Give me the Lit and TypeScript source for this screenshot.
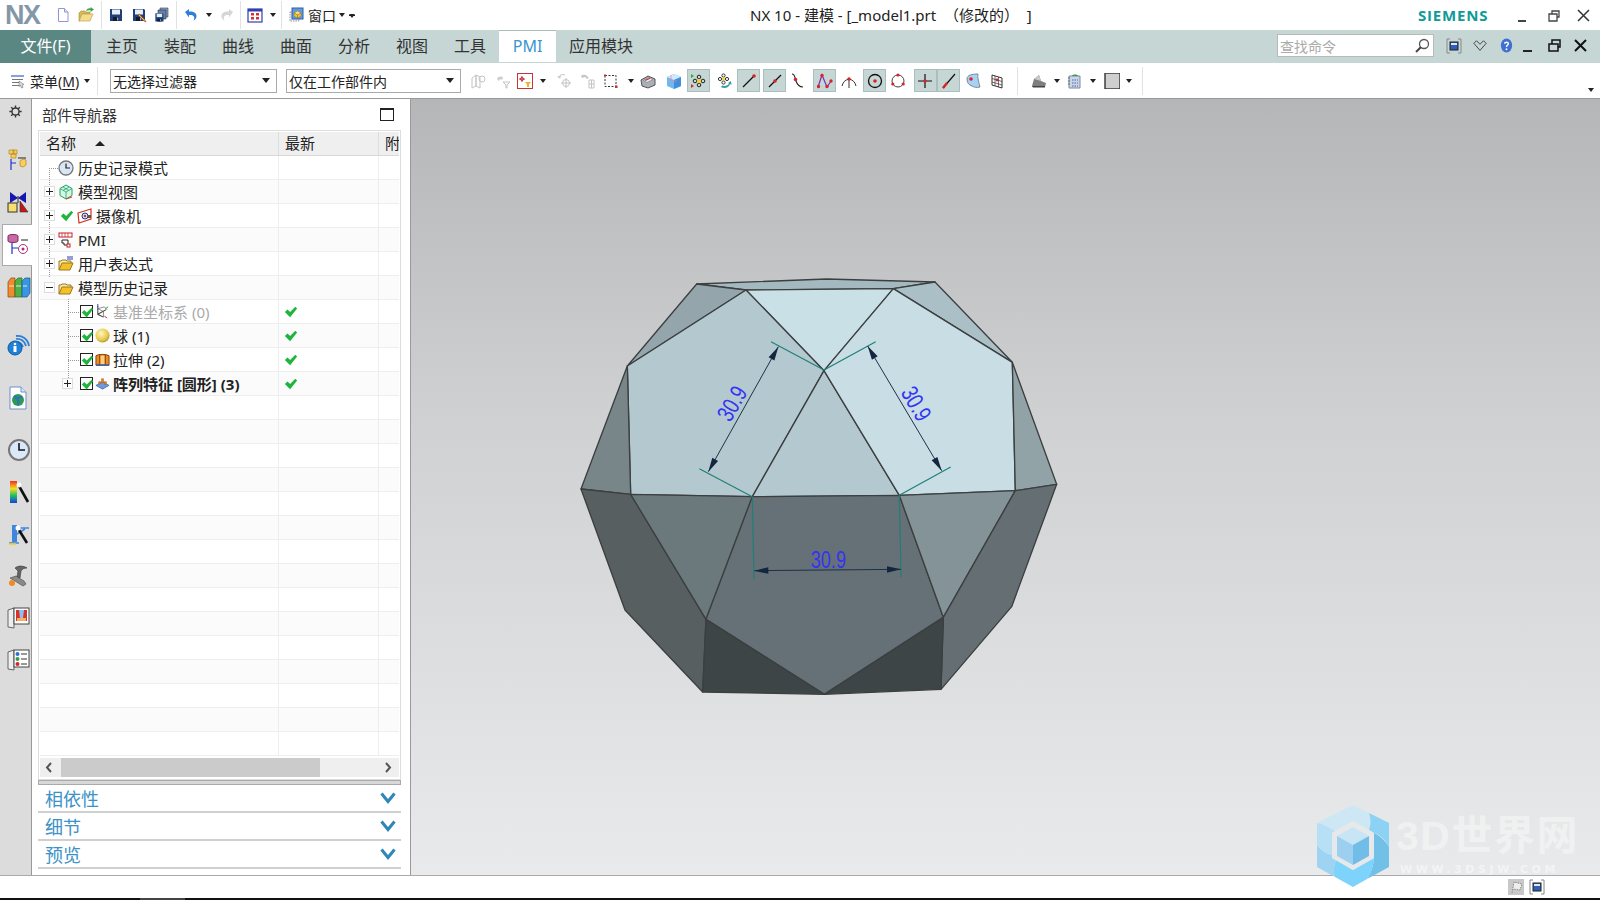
import { LitElement, html, css, svg } from 'lit';
import { customElement } from 'lit/decorators.js';

const ic = (body: unknown, size = 16, box = 16) =>
  html`<svg width=${size} height=${size} viewBox="0 0 ${box} ${box}">${body}</svg>`;

const floppy = svg`<path d="M2 2h11l1 1v11H2z" fill="#1f3f7a"/><rect x="4" y="2.5" width="8" height="5" fill="#e8eef8"/><rect x="5" y="10" width="6" height="4" fill="#101a33"/><rect x="9" y="10.5" width="1.4" height="3" fill="#9ab"/>`;

const icons: Record<string, unknown> = {
  doc: svg`<path d="M3.5 1.5h6l3.5 3.5v9.5h-9.500z" fill="#fff" stroke="#8f96d8"/><path d="M9.500 1.500v3.500h3.500" fill="#e4e6fa" stroke="#8f96d8"/>`,
  open: svg`<path d="M1 6l2-2h4l1 1h4v2H5L2 14H1z" fill="#d9b95a" stroke="#a58a35" stroke-width=".6"/><path d="M4 7h11l-3 7H1z" fill="#f3dc8b" stroke="#b59a45" stroke-width=".6"/><path d="M8 4c1-2.500 3-3 4.500-2.500V0L16 2.500 12.500 5V3.300C11 3 9.500 3 8 4z" fill="#3fa34a"/>`,
  save: floppy,
  saveas: svg`${floppy}<path d="M7 8l6 6 2 1-1-2-6-6z" fill="#f2c230" stroke="#a33" stroke-width=".6"/>`,
  saveall: svg`<path d="M6 1h8v9H6z" fill="#8a9cb8" stroke="#345"  stroke-width=".6"/><path d="M4 3h8v9H4z" fill="#6a80a8" stroke="#234" stroke-width=".6"/><g transform="translate(0 5) scale(.68)">${floppy}</g>`,
  undo: svg`<path d="M2 5l4-3v2.500c4-.5 7.500 1 7.500 4.500 0 2-1 3.500-3 4.500 1-1.500 1-3.500 0-4.500C9.500 8 8 7.800 6 8v2.500z" fill="#2f7fd6"/>`,
  redo: svg`<path d="M14 5l-4-3v2.500c-4-.5-7.500 1-7.500 4.500 0 2 1 3.500 3 4.500-1-1.500-1-3.500 0-4.500C6.500 8 8 7.800 10 8v2.500z" fill="#d6d6d6"/>`,
  win: svg`<rect x="1" y="2" width="14" height="13" fill="#fff" stroke="#2f3fb0" stroke-width="1.200"/><rect x="1" y="2" width="14" height="2.500" fill="#2f3fb0"/><g fill="#d63030"><rect x="4" y="6" width="3" height="2.500"/><rect x="9" y="6" width="3" height="2.500"/><rect x="4" y="10" width="3" height="2.500"/><rect x="9" y="10" width="3" height="2.500"/></g>`,
  layers: svg`<rect x="2" y="5" width="9" height="9" fill="#eee" stroke="#999" stroke-dasharray="1.500 1"/><rect x="4" y="1" width="11" height="11" fill="#5d9be0" stroke="#2f5fa8"/><path d="M6 6l3.500-2 3.500 2-3.500 2z" fill="#ffe07a" stroke="#a8801f" stroke-width=".6"/><path d="M6 6v3l3.500 2V8zM13 6v3l-3.500 2V8z" fill="#f5c542" stroke="#a8801f" stroke-width=".6"/>`,
  menu: svg`<path d="M1 3h13" stroke="#6f86d8" stroke-width="1.600"/><path d="M2 6.500h11M2 9.500h9M2 12.500h9" stroke="#777" stroke-width="1.200"/><path d="M9 8l5 3.500-2 .5 1 2.500-1.500.5-1-2.500-1.500 1z" fill="#ddd" stroke="#777" stroke-width=".6"/>`,
  ghost1: svg`<path d="M2 5l4-3v11l-4 2zM6 2l4 2v11l-4-2z" fill="none" stroke="#c4c4c4"/><circle cx="12" cy="6" r="3" fill="none" stroke="#c4c4c4"/>`,
  ghost2: svg`<path d="M2 6c1-3 4-3 6-2l-1 3-2-1-1 2z" fill="#ccc"/><path d="M8 9h7l-3 3v3h-1v-3z" fill="none" stroke="#c4c4c4"/>`,
  redbox: svg`<rect x=".5" y=".5" width="15" height="15" fill="#fff" stroke="#c8323a"/><path d="M5 3v6M2 6h6" stroke="#c8323a"/><circle cx="5" cy="6" r="1.500" fill="none" stroke="#c8323a"/><path d="M8 9h6l-2 2.500V14h-2v-2.500z" fill="#f2b230"/>`,
  ghost3: svg`<path d="M3 5c0-3 3-4 6-3" fill="none" stroke="#c4c4c4"/><path d="M1 3l3 3 1-3z" fill="#ccc"/><circle cx="10" cy="10" r="3.500" fill="none" stroke="#c4c4c4"/><path d="M10 5v10M5 10h10" fill="none" stroke="#c4c4c4"/>`,
  ghost4: svg`<path d="M2 3c2-2 5-1 6 0l2 2-2 1-2-2-3 1z" fill="#c8c8c8"/><path d="M10 7h5v8h-5zM12.500 7v8M10 11h5" fill="none" stroke="#c4c4c4"/>`,
  dashed: svg`<rect x="2" y="2.500" width="11" height="11" fill="none" stroke="#333" stroke-dasharray="2 1.500"/><rect x="1" y="1.500" width="2" height="2" fill="#c8323a"/><rect x="12" y="12.500" width="2.500" height="2.500" fill="#c8323a"/>`,
  book: svg`<path d="M1 7l7-4 7 3v6l-7 3-6-2z" fill="#a8b0b8" stroke="#555"/><path d="M3 7.500l6-3 4 2-6 3z" fill="#e8e8ec" stroke="#777" stroke-width=".6"/><path d="M5 7.500l5-2.300" stroke="#c8323a" stroke-width="1.200"/>`,
  cube: svg`<path d="M8 1l7 3v9l-7 3-7-3V4z" fill="#6fb8f0"/><path d="M1 4l7 3 7-3-7-3z" fill="#d2e9fa"/><path d="M8 7v9l7-3V4z" fill="#3f8fe0"/><path d="M5 2v6h6" fill="none" stroke="#e88" stroke-width=".7"/>`,
  snapcenter: svg`<g fill="none" stroke="#222"><circle cx="4" cy="8" r="1.800"/><circle cx="12" cy="8" r="1.800"/><circle cx="8" cy="4" r="1.800"/><circle cx="8" cy="12" r="1.800"/></g><path d="M8 5.500L10.500 8 8 10.500 5.500 8z" fill="#f5d020"/><path d="M0 1l3 2-3 2z" fill="#22b040"/><path d="M0 11l3 2-3 2z" fill="#d62c2c"/>`,
  orbit: svg`<g fill="none" stroke="#333"><circle cx="4" cy="6" r="1.600"/><circle cx="11" cy="6" r="1.600"/><circle cx="7.500" cy="2.500" r="1.600"/><circle cx="7.500" cy="9.500" r="1.600"/></g><circle cx="7.500" cy="6" r="1.400" fill="#f5d020"/><path d="M5 14c3 2 8 1 9-3l1.500 1-.5-4-3 2 1 .5c-1 2-4 3-7 2z" fill="#3c9aa8"/>`,
  line1: svg`<path d="M2 14L13 3" stroke="#111" stroke-width="1.200"/><circle cx="13" cy="3" r="1.800" fill="#d8232a"/>`,
  line2: svg`<path d="M2 14L14 2" stroke="#111" stroke-width="1.200"/><circle cx="8" cy="8" r="1.800" fill="#d8232a"/>`,
  curve: svg`<path d="M2 1c3 0 3 4 4 7s3 6 7 6" fill="none" stroke="#222" stroke-width="1.100"/><circle cx="5.500" cy="6.500" r="1.800" fill="#d8232a"/>`,
  zig: svg`<path d="M1 14L5 2l5 12 4-6" fill="none" stroke="#7a2fb0" stroke-width="1.200"/><g fill="#d8232a"><circle cx="5" cy="2.500" r="1.700"/><circle cx="1.500" cy="13.500" r="1.700"/><circle cx="10" cy="13.500" r="1.700"/><circle cx="14" cy="8" r="1.700"/></g>`,
  arrowpt: svg`<path d="M1 13c1-4 3-6 7-7 4 1 6 3 7 7M8 6v9" fill="none" stroke="#333"/><circle cx="8" cy="6" r="1.700" fill="#d8232a"/>`,
  target: svg`<circle cx="8" cy="8" r="6.500" fill="none" stroke="#111" stroke-width="1.300"/><circle cx="8" cy="8" r="1.800" fill="#d8232a"/>`,
  ring: svg`<circle cx="8" cy="8" r="6" fill="none" stroke="#444"/><g fill="#d8232a"><circle cx="8" cy="2" r="1.600"/><circle cx="2.800" cy="11" r="1.600"/><circle cx="13.200" cy="11" r="1.600"/></g>`,
  plus: svg`<path d="M8 1v14M1 8h14" stroke="#111" stroke-width="1.200"/><circle cx="8" cy="8" r="1.700" fill="#d8232a"/>`,
  slash: svg`<path d="M2 15L14 1" stroke="#111" stroke-width="1.200"/><path d="M2 15l4-5" stroke="#d8232a" stroke-width="2.400"/>`,
  face: svg`<path d="M2 6c0-4 5-5 11-5-1 3 1 9 2 13-4 1-6 0-8-1-3-1-5-3-5-7z" fill="#a9d2f2" stroke="#789"/><circle cx="6" cy="6" r="1.800" fill="#d8232a"/>`,
  mesh: svg`<path d="M3 2l10 3v10L3 12z" fill="#fff" stroke="#333"/><path d="M6 3v10M9.500 4v10M3 5.500l10 3M3 9l10 3" stroke="#333" stroke-width=".7"/><circle cx="8" cy="7" r="1.400" fill="#d8232a"/>`,
  shade: svg`<path d="M1 13l2-7 5-4 2 6 5 2-1 4H2z" fill="#7d7f80"/><path d="M8 2l2 6-7-2z" fill="#c8c8c8"/><path d="M1 13h13v1.500H2z" fill="#444"/>`,
  notes: svg`<path d="M2 3h11v12H2z" fill="#c9d6e8" stroke="#7b8b9d"/><path d="M1 5h2M1 8h2M1 11h2" stroke="#666"/><path d="M5 3c0-2 6-2 6 0z" fill="#3f9a5a"/><path d="M5 7h6M5 10h6M5 13h6" stroke="#4a60b0" stroke-dasharray="1.500 1"/>`,
  swatch: svg`<rect x="1" y="0" width="15" height="16" fill="#cfcfcf" stroke="#333" stroke-width="1.400"/>`,
  mag: svg`<circle cx="10" cy="6" r="4.500" fill="#fff" stroke="#555" stroke-width="1.300"/><path d="M7 9l-5 5" stroke="#444" stroke-width="2"/>`,
  fit: svg`<path d="M4 1H1v14h3M12 1h3v14h-3" fill="none" stroke="#888"/><rect x="4" y="4" width="8" height="8" fill="#2f5fb8" stroke="#222"/><rect x="5" y="5" width="6" height="2" fill="#dfe8f8"/>`,
  vee: svg`<path d="M1 5l3-3 4 4 4-4 3 3-7 8z" fill="none" stroke="#333"/>`,
  help: svg`<ellipse cx="8" cy="8" rx="6" ry="7.500" fill="#3f6fd0"/><path d="M6 6c0-2 4-2 4 0 0 1.500-2 1.500-2 3.500" fill="none" stroke="#fff" stroke-width="1.500"/><circle cx="8" cy="12" r="1" fill="#fff"/>`,
  clock: svg`<circle cx="8" cy="8" r="7" fill="#d8e6f5" stroke="#777" stroke-width="1.300"/><path d="M8 3.500V8h4" fill="none" stroke="#222" stroke-width="1.200"/>`,
  box3: svg`<path d="M8 1l6 3.500v7L8 15l-6-3.500v-7z" fill="#d6f5e4" stroke="#1ea36b"/><path d="M2 4.500L8 8l6-3.500M8 8v7M5 3l6 3.500M11 3L5 6.500" fill="none" stroke="#1ea36b" stroke-width=".8"/><path d="M8 15l6-2" stroke="#e0442c" stroke-width="1.200"/>`,
  cam: svg`<path d="M1 5l13-4v10L2 15z" fill="#fff" stroke="#d6301f" stroke-width="1.200"/><circle cx="8" cy="8" r="3" fill="#f5c5bf" stroke="#233a8f"/><circle cx="8" cy="8" r="1" fill="#233a8f"/><rect x="11" y="7" width="3" height="3" fill="#555"/>`,
  pmi: svg`<rect x="1" y="1" width="13" height="4" fill="#fff" stroke="#c81e2a"/><path d="M4 1v4M7 1v4M10 1v4" stroke="#c81e2a" stroke-width=".7"/><path d="M4 8h6v5H6V11H4z" fill="#fff" stroke="#222"/><rect x="9" y="12" width="3" height="3" fill="#fff" stroke="#c81e2a"/>`,
  folder: svg`<path d="M1 14V5h2l1-1h4l1 1h4v2" fill="#f9e7a8" stroke="#9a7a1e"/><path d="M1 14l3-7h11l-3 7z" fill="#f5bf28" stroke="#9a7a1e"/>`,
  folderx: svg`<path d="M1 14V5h2l1-1h4l1 1h4v2" fill="#f9e7a8" stroke="#9a7a1e"/><path d="M1 14l3-7h11l-3 7z" fill="#f5bf28" stroke="#9a7a1e"/><path d="M9 1h6M9 3h6" stroke="#2f3fb0"/>`,
  csys: svg`<path d="M3 2v9l6 3M3 11l9-5" fill="none" stroke="#444" stroke-width="1.100"/><path d="M3 5l6 3v6M3 5l7-2 3 3" fill="none" stroke="#555" stroke-width=".7"/><path d="M3 0v3" stroke="#2233cc"/><path d="M11 5l3-2" stroke="#1ea33c"/><path d="M10 13l3 2" stroke="#d8232a"/>`,
  ball: svg`<defs><radialGradient id="bl" cx=".4" cy=".35" r=".7"><stop offset="0" stop-color="#fff6c0"/><stop offset=".7" stop-color="#e3c84a"/><stop offset="1" stop-color="#a8902a"/></radialGradient></defs><circle cx="8" cy="8" r="7.500" fill="url(#bl)"/>`,
  extrude: svg`<path d="M1 4c3-2 11-2 14 0v10H1z" fill="#f08a24" stroke="#7a4210"/><path d="M5 3v11M11 3v11" stroke="#7a4210"/><path d="M6 4h4v9H6z" fill="#ffd07a"/><path d="M1 14h14" stroke="#2f5fb8" stroke-width="1.500"/>`,
  pattern: svg`<path d="M1 10l7-4 7 4-7 4z" fill="#6a9be0" stroke="#2f5fb8" stroke-width=".7"/><path d="M4 9V6h2v2zM7 7V3h2v4zM10 9V6h2v3z" fill="#f08a24" stroke="#a85510" stroke-width=".6"/>`,
  gear: svg`<circle cx="8" cy="8" r="3.800" fill="none" stroke="#333" stroke-width="1.500"/><path d="M8 1.500v2.500M8 12v2.500M1.500 8H4M12 8h2.500M3.400 3.400l1.800 1.800M10.800 10.800l1.800 1.800M3.400 12.600l1.800-1.800M10.800 5.200l1.800-1.800" stroke="#333" stroke-width="1.500"/>`,
  asm: svg`<path d="M2 1h5v4H2zM6 1h4v4H6zM4 5h5v4H4z" fill="#f5d060" stroke="#b8902a" stroke-width=".8"/><path d="M4 10v11M4 14h5" stroke="#2233cc" stroke-width="1.200"/><path d="M11 9h8" stroke="#222"/><path d="M13 12l3-2 3 1v5l-3 2-3-1z" fill="#f5d060" stroke="#b8902a" stroke-width=".8"/>`,
  cons: svg`<path d="M3 1l8 6 8-6v11l-8-5-8 5z" fill="#1616b0"/><rect x="1" y="12" width="9" height="9" fill="#f5e070" stroke="#333"/><path d="M13 10l8 11h-8z" fill="#c81616" stroke="#333" stroke-width=".6"/><path d="M11 5v7" stroke="#222"/>`,
  partnav: svg`<path d="M1 3c0-2 10-2 10 0v5c0 2-10 2-10 0z" fill="#c868a8" stroke="#7a2a60"/><path d="M5 10v11M5 15h6" stroke="#2233cc" stroke-width="1.200"/><path d="M14 7h7" stroke="#222"/><circle cx="16" cy="16" r="4.500" fill="#fff" stroke="#a8327a"/><circle cx="16" cy="16" r="1.500" fill="#a8327a"/>`,
  books: svg`<path d="M1 7l3-4h4v19H1z" fill="#f28a30" stroke="#8a4a10" stroke-width=".7"/><path d="M8 6l3-3h4v19H8z" fill="#4fb048" stroke="#256a20" stroke-width=".7"/><path d="M15 6l3-3h5v15l-3 4h-5z" fill="#3a96e0" stroke="#1a5a90" stroke-width=".7"/><path d="M2 11h5M9 11h5M16 11h4" stroke="#fff" stroke-width=".8"/>`,
  info: svg`<path d="M9 3c6-1 12 3 13 10M9 6c4-1 9 2 10 7M9 9c3 0 6 2 7 5" fill="none" stroke="#2f7fd6" stroke-width="1.800"/><circle cx="8" cy="15" r="7" fill="#1f80d8" stroke="#0f5aa0"/><circle cx="8" cy="11" r="1.300" fill="#fff"/><rect x="6.500" y="13" width="3" height="6" fill="#fff"/>`,
  webdoc: svg`<path d="M3 1h11l5 5v17H3z" fill="#fff" stroke="#6a8fc8"/><path d="M14 1v5h5" fill="#dde8f8" stroke="#6a8fc8"/><circle cx="11" cy="14" r="6" fill="#2f9a55"/><path d="M7 10c3 1 5 4 4 9M15 11c-3 0-4 2-7 1" stroke="#2f6fc8" stroke-width="1.800" fill="none"/>`,
  clockbig: svg`<circle cx="12" cy="12" r="10" fill="#dbe8f8" stroke="#777" stroke-width="2"/><path d="M12 5v7h6" fill="none" stroke="#112" stroke-width="1.600"/>`,
  color: svg`<defs><linearGradient id="sp" x1="0" y1="0" x2="0" y2="1"><stop offset="0" stop-color="#f03020"/><stop offset=".35" stop-color="#f5e020"/><stop offset=".65" stop-color="#20c060"/><stop offset="1" stop-color="#1a40e0"/></linearGradient></defs><rect x="3" y="1" width="7" height="22" fill="url(#sp)"/><path d="M12 6l9 16" stroke="#111" stroke-width="2.600"/><circle cx="12" cy="5" r="2.500" fill="#fff" opacity=".9"/>`,
  analysis: svg`<path d="M5 3h5v17H5z" fill="#3f86dc"/><path d="M10 6h12M10 12l8-5M2 21h10" stroke="#3f86dc" stroke-width="1.500" fill="none"/><path d="M12 8l8 13" stroke="#111" stroke-width="2.600"/><circle cx="11" cy="6" r="2.500" fill="#fff"/><path d="M2 22h7" stroke="#f5d020" stroke-width="1.500"/>`,
  tools: svg`<path d="M8 4c4-3 9-2 12 0-3 0-5 1-6 3l-1 7-3-1 1-6z" fill="#666" stroke="#333" stroke-width=".6"/><path d="M3 14l6-2 8 5 2 3-3 2-8-5z" fill="#8a8a8e" stroke="#444" stroke-width=".6"/><circle cx="5" cy="19" r="3" fill="#f08a24"/>`,
  reel: svg`<path d="M1 4l6-2v20l-6-1z" fill="#eee" stroke="#666"/><rect x="7" y="2" width="15" height="16" fill="#fff" stroke="#444"/><rect x="9" y="4" width="11" height="11" fill="#d8322a"/><path d="M12 4h5l-1 8h-3z" fill="#8ac0f5"/><rect x="10" y="12" width="9" height="3" fill="#f5b060"/>`,
  list: svg`<path d="M1 4l6-2v20l-6-1z" fill="#eee" stroke="#666"/><rect x="7" y="2" width="15" height="17" fill="#fff" stroke="#444"/><circle cx="10.500" cy="6" r="2" fill="#2f6fd6"/><circle cx="10.500" cy="11" r="2" fill="#2fa04a"/><circle cx="10.500" cy="16" r="2" fill="#d8232a"/><path d="M14 6h6M14 11h6M14 16h6" stroke="#333"/>`,
  check: svg`<path d="M1 8l3-3 3 3 6-6 2 2-8 10z" fill="#1fb53c"/>`,
  flag: svg`<rect width="16" height="16" fill="#c8c8c8"/><path d="M4 14L6 3l8 2-2 6-7-1" fill="#eee" stroke="#888" stroke-dasharray="1.500 1"/>`,
};

const icon = (k: string, size = 16) => {
  const big = ['asm', 'cons', 'partnav', 'books', 'info', 'webdoc', 'clockbig', 'color', 'analysis', 'tools', 'reel', 'list'];
  return ic(icons[k], size, big.includes(k) ? 24 : 16);
};

type Item = { c: number; k?: string; hl?: boolean; drop?: boolean; sep?: boolean };

const quick: Item[] = [
  { c: 46, sep: true },
  { c: 63, k: 'doc' }, { c: 86, k: 'open' },
  { c: 101, sep: true },
  { c: 116, k: 'save' }, { c: 139, k: 'saveas' }, { c: 162, k: 'saveall' },
  { c: 176, sep: true },
  { c: 191, k: 'undo' }, { c: 209, drop: true }, { c: 227, k: 'redo' },
  { c: 240, sep: true },
  { c: 255, k: 'win' }, { c: 273, drop: true },
  { c: 281, sep: true },
  { c: 296, k: 'layers' },
];

const tools: Item[] = [
  { c: 478, k: 'ghost1' }, { c: 503, k: 'ghost2' }, { c: 525, k: 'redbox' }, { c: 542.5, drop: true },
  { c: 564, k: 'ghost3' }, { c: 587, k: 'ghost4' }, { c: 611, k: 'dashed' }, { c: 630.5, drop: true },
  { c: 648, k: 'book' }, { c: 674, k: 'cube' }, { c: 698.5, k: 'snapcenter', hl: true }, { c: 723.500, k: 'orbit' },
  { c: 748.500, k: 'line1', hl: true }, { c: 774.500, k: 'line2', hl: true }, { c: 798, k: 'curve' },
  { c: 824.500, k: 'zig', hl: true }, { c: 849, k: 'arrowpt' }, { c: 874.500, k: 'target', hl: true },
  { c: 898, k: 'ring' }, { c: 925, k: 'plus', hl: true }, { c: 948.500, k: 'slash', hl: true },
  { c: 973, k: 'face' }, { c: 997, k: 'mesh' }, { c: 1017.500, sep: true },
  { c: 1039, k: 'shade' }, { c: 1056.500, drop: true }, { c: 1075, k: 'notes' }, { c: 1093, drop: true },
  { c: 1111.500, k: 'swatch' }, { c: 1129, drop: true }, { c: 1142.500, sep: true },
];

const widthOf = (i: Item) => (i.sep ? 1 : i.drop ? 6 : i.hl ? 23 : 18);

// lays icons out in a row from their measured centres
const strip = (items: Item[], start: number) => {
  let end = start;
  return items.map((i) => {
    const w = widthOf(i);
    const gap = i.c - w / 2 - end;
    end = i.c + w / 2;
    if (i.sep) return html`<span class="sep" style="margin-left:${gap}px"></span>`;
    if (i.drop) return html`<span class="caret" style="margin-left:${gap}px"></span>`;
    return html`<span class="slot ${i.hl ? 'hl' : ''}" style="margin-left:${gap}px;width:${w}px">${icon(i.k!)}</span>`;
  });
};

const tabs = ['主页', '装配', '曲线', '曲面', '分析', '视图', '工具', 'PMI', '应用模块'];

type Row = { label?: string; icon?: string; exp?: '+' | '-'; lvl?: 1; tick?: boolean; pre?: boolean; cls?: string };
const rows: Row[] = [
  { label: '历史记录模式', icon: 'clock' },
  { label: '模型视图', icon: 'box3', exp: '+' },
  { label: '摄像机', icon: 'cam', exp: '+', pre: true },
  { label: 'PMI', icon: 'pmi', exp: '+' },
  { label: '用户表达式', icon: 'folderx', exp: '+' },
  { label: '模型历史记录', icon: 'folder', exp: '-' },
  { label: '基准坐标系 (0)', icon: 'csys', lvl: 1, tick: true, cls: 'dim' },
  { label: '球 (1)', icon: 'ball', lvl: 1, tick: true },
  { label: '拉伸 (2)', icon: 'extrude', lvl: 1, tick: true },
  { label: '阵列特征 [圆形] (3)', icon: 'pattern', lvl: 1, tick: true, exp: '+', cls: 'bold' },
  ...Array.from({ length: 15 }, () => ({} as Row)),
];

const rail = [
  { k: 'asm' }, { k: 'cons' }, { k: 'partnav', on: true }, { k: 'books' },
  { k: 'info', gap: 16 }, { k: 'webdoc', gap: 11 }, { k: 'clockbig', gap: 10 },
  { k: 'color' }, { k: 'analysis' }, { k: 'tools' }, { k: 'reel' }, { k: 'list' },
];

// polyhedron faces, in units of a third of a pixel
const faces: [string, string][] = [
  ['380,72 528,90 970,86 1095,66 770,57', '#a3b9bf'],
  ['380,72 528,90 172,318', '#94a6ac'],
  ['1095,66 970,86 1327,307', '#abc0c6'],
  ['528,90 970,86 762,332', '#c9e0e6'],
  ['528,90 762,332 547,710 182,703 172,318', '#b4c9cf'],
  ['762,332 988,706 547,710', '#b4c9cf'],
  ['970,86 1327,307 1336,692 988,706 762,332', '#c8dde4'],
  ['172,318 182,703 33,687', '#788589'],
  ['1327,307 1460,673 1336,692', '#91a3a7'],
  ['33,687 182,703 408,1078 398,1296 165,1050', '#585f60'],
  ['182,703 547,710 408,1078', '#6c797c'],
  ['547,710 988,706 1120,1072 763,1303 408,1078', '#667177'],
  ['988,706 1336,692 1120,1072', '#849397'],
  ['1336,692 1460,673 1325,1040 1113,1288 1120,1072', '#656f73'],
  ['408,1078 763,1303 398,1296', '#3d4546'],
  ['1120,1072 1113,1288 763,1303', '#3d4546'],
];

const witness = [
  [603, 245, 762, 330], [917, 245, 762, 330], [388, 626, 547, 710],
  [1142, 621, 988, 706], [547, 710, 552, 958], [988, 706, 993, 952],
];

const dims = [
  [625, 260, 415, 635], [893, 258, 1115, 632], [553, 932, 993, 928],
];

const dimTexts = [
  { x: 485, y: 430, r: -60 }, { x: 1040, y: 430, r: 60 }, { x: 775, y: 897, r: 0 },
];

const arrow = (x1: number, y1: number, x2: number, y2: number) => {
  const a = (Math.atan2(y2 - y1, x2 - x1) * 180) / Math.PI;
  return svg`<path d="M0 0L-42 -10L-42 10Z" fill="#12263f" transform="translate(${x2} ${y2}) rotate(${a})"/>`;
};

@customElement('app-root')
export class AppRoot extends LitElement {
  static override styles = css`
    :host {
      display: flex;
      flex-direction: column;
      position: relative;
      width: 1600px;
      height: 900px;
      overflow: hidden;
      background: #fff;
      color: #222;
      font-family: 'Noto Sans', 'Noto Sans CJK SC', sans-serif;
      font-size: 14px;
    }
    svg { display: block; flex: none; }

    .title { flex: none; height: 30px; display: flex; align-items: center; position: relative; }
    .logo { flex: none; width: 46px; padding-left: 5px; box-sizing: border-box; font: bold 27px 'Liberation Sans', sans-serif; color: #8497a8; letter-spacing: -1.500px; }
    .window-text { margin-left: 3px; white-space: nowrap; }
    .title-text { position: absolute; left: 750px; top: 4px; font-size: 15px; line-height: 22px; white-space: pre; color: #222; }
    .siemens { position: absolute; left: 1418px; top: 5px; font: bold 15px/20px 'Open Sans', sans-serif; color: #0f9b98; letter-spacing: .8px; }
    .sep { flex: none; width: 1px; height: 28px; background: #e2e2e2; }
    .slot { flex: none; display: flex; align-items: center; justify-content: center; box-sizing: border-box; height: 23px; }
    .slot.hl { background: #c6d6d5; border: 1px solid #a9bfbd; }
    .caret { flex: none; width: 0; height: 0; border: 3px solid transparent; border-top: 4px solid #222; border-bottom: 0; box-sizing: content-box; }
    .lined { position: relative; margin-top: 1px; }
    .lined::before { content: ''; position: absolute; left: -3px; top: -3px; width: 6px; height: 1px; background: #222; }
    .ctrls { position: absolute; right: 8px; top: 0; height: 30px; display: flex; align-items: center; gap: 13px; }
    .ctl { width: 17px; height: 17px; }

    .tabs { flex: none; height: 33px; background: #c6d6d5; display: flex; align-items: stretch; font-size: 16px; position: relative; }
    .file { width: 91px; margin-right: 2px; padding-bottom: 3px; box-sizing: border-box; background: #5b8783; color: #fff; display: flex; align-items: center; justify-content: center; }
    .tab { padding: 0 13px 3px; display: flex; align-items: center; color: #333; }
    .tab.on { width: 57px; box-sizing: border-box; padding: 0 0 2px; justify-content: center; background: #fff; color: #3a95cf; border-top: 1px solid #a8bdbb; margin-bottom: 1px; }
    .search-tools { position: absolute; left: 1277px; top: 4px; height: 23px; display: flex; align-items: center; }
    .search { width: 157px; height: 23px; box-sizing: border-box; background: #fff; border: 1px solid #b9b9b9; display: flex; align-items: center; justify-content: space-between; padding: 0 3px 0 2px; color: #aaa; font-size: 14px; }
    .tb-icons { display: flex; align-items: center; }
    .tb-icons .slot { width: 26px; }

    .toolbar { flex: none; height: 36px; box-sizing: border-box; border-bottom: 1px solid #999; display: flex; align-items: center; position: relative; }
    .menu { flex: none; width: 97px; display: flex; align-items: center; padding-left: 10px; box-sizing: border-box; }
    .menu span.t { margin-left: 4px; white-space: nowrap; }
    .menu u { text-underline-offset: 2px; }
    .menu .caret { margin-left: 5px; }
    .toolbar > .sep { height: 28px; }
    .select { flex: none; height: 24px; box-sizing: border-box; border: 1px solid #aaa; display: flex; align-items: center; justify-content: space-between; padding: 0 6px 0 2px; }
    .select.a { width: 167px; margin-left: 12px; }
    .select.b { width: 175px; margin-left: 9px; }
    .select .caret { border-width: 4px; border-top-width: 5px; border-bottom-width: 0; }
    .more { position: absolute; right: 6px; bottom: 6px; }

    .main { flex: 1; min-height: 0; display: flex; }
    .rail { flex: none; width: 32px; box-sizing: border-box; background: #dcdcdc; border-right: 1px solid #999; display: flex; flex-direction: column; align-items: stretch; }
    .rail .gear { height: 41px; display: flex; justify-content: center; padding: 5px 0 0 0; box-sizing: border-box; }
    .rail .it { height: 42px; display: flex; align-items: center; justify-content: center; padding-left: 6px; }
    .rail .it.on { background: #fff; border: 1px solid #aaa; border-right: 0; margin-left: 2px; margin-right: -1px; box-sizing: border-box; padding: 0 0 0 3px; position: relative; }

    .panel { flex: none; width: 379px; box-sizing: border-box; border-right: 1px solid #999; padding: 0 9px 0 6px; display: flex; flex-direction: column; background: #fff; }
    .phead { flex: none; height: 31px; display: flex; align-items: center; justify-content: space-between; padding: 0 7px 0 4px; font-size: 15px; color: #333; }
    .maxbox { width: 12px; height: 10px; border: 1.500px solid #222; border-top-width: 2px; }
    .table { flex: none; height: 650px; box-sizing: border-box; border: 1px solid #ddd; padding: 1px; display: flex; flex-direction: column; }
    .hrow { flex: none; height: 24px; box-sizing: border-box; display: grid; grid-template-columns: 239px 100px 1fr; background: #efefef; border-bottom: 1px solid #d8d8d8; font-size: 15px; overflow: hidden; }
    .hrow > div { padding-left: 6px; border-right: 1px solid #ddd; line-height: 23px; display: flex; align-items: center; white-space: nowrap; overflow: hidden; }
    .hrow > div:last-child { border: 0; }
    .sort { width: 0; height: 0; margin-left: 19px; border: 5px solid transparent; border-bottom: 5px solid #222; border-top: 0; }
    .rows { flex: none; position: relative; }
    .row { height: 24px; box-sizing: border-box; display: grid; grid-template-columns: 239px 100px 1fr; border-bottom: 1px solid #eee; font-size: 15px; }
    .row:nth-child(even) { background: #fbfbfb; }
    .row > div { border-right: 1px solid #eee; display: flex; align-items: center; white-space: nowrap; }
    .row > div:last-child { border: 0; }
    .name { padding-left: 4px; }
    .name.l1 { padding-left: 22px; }
    .exp { flex: none; width: 11px; height: 11px; box-sizing: border-box; position: relative; z-index: 1; background: #fff; border: 1px solid #ddd; display: flex; align-items: center; justify-content: center; }
    .exp i { position: absolute; left: 1px; right: 1px; top: 4px; height: 1px; background: #222; }
    .exp b { position: absolute; top: 1px; bottom: 1px; left: 4px; width: 1px; background: #222; }
    .noexp { flex: none; width: 11px; }
    .name .ico { margin: 0 4px 0 3px; }
    .name.pre .ico { margin: 0 3px 0 0; }
    .name.pre .pchk { margin-left: 5px; margin-right: 1px; }
    .name.l1 .ico { margin: 0 3px 0 2px; width: 15px; }
    .ico { flex: none; width: 16px; position: relative; z-index: 1; background: transparent; }
    .chk { flex: none; width: 13px; height: 13px; box-sizing: border-box; border: 1px solid #222; background: #fff; margin-left: 7px; position: relative; z-index: 1; }
    .chk svg { position: absolute; left: 0; top: 0; }
    .dim { color: #aaa; }
    .bold { font-weight: 700; }
    .latest { padding: 1px 0 0 5px; }
    .vline, .hline { position: absolute; border: 0 dotted #999; }
    .vline { border-left-width: 1px; }
    .hline { border-top-width: 1px; }
    .v0 { left: 9px; top: 12px; height: 109px; }
    .h0 { left: 9px; top: 12px; width: 9px; }
    .v1 { left: 28px; top: 143px; height: 85px; }
    .scroll { flex: none; margin-top: 2px; height: 19px; background: #efefef; display: flex; align-items: center; justify-content: space-between; padding-left: 21px; position: relative; }
    .thumb { width: 259px; height: 19px; background: #cbcbcb; }
    .arr { position: absolute; top: 4px; }
    .arr.l { left: 5px; }
    .arr.r { right: 7px; }
    .split { flex: none; height: 5px; box-sizing: border-box; background: #d8d8d8; border: 1px solid #aaa; }
    .sec { flex: none; height: 28px; box-sizing: border-box; border-bottom: 2px solid #d0d0d0; display: flex; align-items: center; justify-content: space-between; padding: 0 5px 0 7px; color: #3c92c6; font-size: 18px; }

    .view { flex: 1; min-width: 0; background: linear-gradient(#b5b6b8, #cfd0d2 40%, #e9eaeb); }
    .status { flex: none; height: 23px; box-sizing: border-box; border-top: 1px solid #aaa; background: #fff; display: flex; align-items: center; justify-content: flex-end; gap: 5px; padding-right: 55px; }
    .black { flex: none; height: 2px; background: linear-gradient(90deg, #111 140px, #444 140px, #444 185px, #111 185px); }

    .mark { position: absolute; left: 1317px; top: 805px; width: 270px; height: 82px; }
    .mark-text { position: absolute; left: 79px; top: 9px; font: bold 41px/44px 'Liberation Sans', 'Noto Sans CJK SC', sans-serif; color: rgba(255, 255, 255, .42); white-space: nowrap; letter-spacing: 1.500px; }
    .mark-sub { position: absolute; left: 83px; top: 58px; font: bold 11px/13px 'DejaVu Sans', sans-serif; color: rgba(255, 255, 255, .5); letter-spacing: 3.600px; white-space: nowrap; }
  `;

  private renderRow(r: Row) {
    const exp = r.exp
      ? html`<span class="exp"><i></i>${r.exp === '+' ? html`<b></b>` : ''}</span>`
      : html`<span class="noexp"></span>`;
    const tick = html`<span class="chk">${icon('check', 13)}</span>`;
    return html`
      <div class="row">
        <div class="name ${r.lvl ? 'l1' : ''} ${r.pre ? 'pre' : ''}">
          ${r.label ? exp : ''}
          ${r.pre ? html`<span class="ico pchk">${icon('check', 14)}</span>` : ''}
          ${r.lvl ? tick : ''}
          ${r.icon ? html`<span class="ico">${icon(r.icon, r.lvl ? 15 : 16)}</span>` : ''}
          ${r.label ? html`<span class=${r.cls ?? ''}>${r.label}</span>` : ''}
        </div>
        <div class="latest">${r.tick ? icon('check', 14) : ''}</div>
        <div></div>
      </div>
    `;
  }

  private renderModel() {
    return html`<svg class="model" width="1189" height="776" viewBox="-477 -483 3567 2328">
      ${faces.map(([p, f]) => svg`<polygon points=${p} fill=${f} stroke="#3c3f40" stroke-width="4" stroke-linejoin="round"/>`)}
      ${witness.map(([a, b, c, d]) => svg`<line x1=${a} y1=${b} x2=${c} y2=${d} stroke="#1f7f78" stroke-width="3.500"/>`)}
      ${dims.map(([a, b, c, d]) => svg`
        <line x1=${a} y1=${b} x2=${c} y2=${d} stroke="#1d3148" stroke-width="3"/>
        ${arrow(a, b, c, d)}${arrow(c, d, a, b)}`)}
      ${dimTexts.map((t) => svg`<text transform="translate(${t.x} ${t.y}) rotate(${t.r})" text-anchor="middle" y="26"
        font-family="Liberation Sans" font-size="72" fill="#3434f2" textLength="106" lengthAdjust="spacingAndGlyphs">30.9</text>`)}
    </svg>`;
  }

  private renderMark() {
    return html`<div class="mark">
      <svg width="72" height="82" viewBox="0 0 72 82">
        <path d="M0 18L36 0L52 8C54 16 54 22 52 25L36 16L18 26C12 22 6 19 0 18z" fill="#cde7f5"/>
        <path d="M52 8L72 18V42C68 34 62 29 57 28L52 25C54 20 54 14 52 8z" fill="#8bd2f5"/>
        <path d="M72 42V62L50 74C54 68 56 62 57 53V28C62 30 68 35 72 42z" fill="#70c0e8"/>
        <path d="M50 74L36 82L18 72C16 66 17 60 19 55L36 65L57 53C56 62 54 68 50 74z" fill="#7dd3fb"/>
        <path d="M18 72L0 62V40C5 46 10 49 15 50V53L19 55C17 60 16 66 18 72z" fill="#9ed4f2"/>
        <path d="M0 18C6 19 12 22 18 26L15 28V50C10 49 5 46 0 40z" fill="#b7e0f6"/>
        <path d="M36 16L57 28V53L36 65L15 53V28z" fill="#e6e8ea"/>
        <path d="M36 22L52 31L36 40L20 31z" fill="#c7e5f5"/>
        <path d="M20 31L36 40V60L20 51z" fill="#9dd0f0"/>
        <path d="M52 31L36 40V60L52 51z" fill="#70bde8"/>
      </svg>
      <span class="mark-text">3D世界网</span>
      <span class="mark-sub">WWW.3DSJW.COM</span>
    </div>`;
  }

  override render() {
    return html`
      <div class="title">
        <span class="logo">NX</span>
        ${strip(quick.slice(1), 46)}
        <span class="window-text">窗口</span>
        <span class="caret" style="margin-left:3px"></span>
        <span class="caret lined" style="margin-left:4px"></span>
        <span class="title-text">NX 10 - 建模 - [_model1.prt  （修改的）  ]</span>
        <span class="siemens">SIEMENS</span>
        <div class="ctrls">
          <svg class="ctl" viewBox="0 0 17 17"><path d="M3 14h8" stroke="#444" stroke-width="2"/></svg>
          <svg class="ctl" viewBox="0 0 17 17"><path d="M4 7h8v7H4zM7 7V4h7v6h-2" fill="none" stroke="#444" stroke-width="1.300"/></svg>
          <svg class="ctl" viewBox="0 0 17 17"><path d="M3 3l11 11M14 3L3 14" stroke="#333" stroke-width="1.500"/></svg>
        </div>
      </div>
      <div class="tabs">
        <div class="file">文件(F)</div>
        ${tabs.map((t) => html`<div class="tab ${t === 'PMI' ? 'on' : ''}">${t}</div>`)}
        <div class="search-tools">
          <div class="search">查找命令 ${ic(icons.mag)}</div>
          <div class="tb-icons">
            <span class="slot" style="margin-left:7px">${icon('fit')}</span>
            <span class="slot">${icon('vee', 14)}</span>
            <span class="slot">${icon('help', 15)}</span>
            <svg class="ctl" style="margin-left:1px" viewBox="0 0 17 17"><path d="M3 14h9" stroke="#222" stroke-width="2"/></svg>
            <svg class="ctl" style="margin-left:9px" viewBox="0 0 17 17"><path d="M3 7h9v7H3zM6 7V3h8v7h-2" fill="none" stroke="#111" stroke-width="1.500"/></svg>
            <svg class="ctl" style="margin-left:9px" viewBox="0 0 17 17"><path d="M3 3l11 11M14 3L3 14" stroke="#111" stroke-width="2"/></svg>
          </div>
        </div>
      </div>
      <div class="toolbar">
        <div class="menu">
          ${icon('menu')}
          <span class="t">菜单(<u>M</u>)</span>
          <span class="caret"></span>
        </div>
        <span class="sep"></span>
        <div class="select a">无选择过滤器<span class="caret"></span></div>
        <div class="select b">仅在工作部件内<span class="caret"></span></div>
        ${strip(tools, 461)}
        <span class="caret more"></span>
      </div>
      <div class="main">
        <div class="rail">
          <div class="gear">${icon('gear', 15)}</div>
          ${rail.map((r) => html`<div class="it ${r.on ? 'on' : ''}" style=${r.gap ? `margin-top:${r.gap}px` : ''}>${icon(r.k, 24)}</div>`)}
        </div>
        <div class="panel">
          <div class="phead">部件导航器<span class="maxbox"></span></div>
          <div class="table">
            <div class="hrow">
              <div>名称<span class="sort"></span></div>
              <div>最新</div>
              <div>附</div>
            </div>
            <div class="rows">
              ${rows.map((r) => this.renderRow(r))}
              <span class="vline v0"></span>
              <span class="hline h0"></span>
              <span class="vline v1"></span>
              ${[7, 8, 9].map((i) => html`<span class="hline" style="left:28px;top:${(i - 1) * 24 + 12}px;width:11px"></span>`)}
            </div>
            <div class="scroll">
              <svg class="arr l" width="8" height="11" viewBox="0 0 8 11"><path d="M6 1L2 5.500 6 10" fill="none" stroke="#555" stroke-width="2"/></svg>
              <div class="thumb"></div>
              <svg class="arr r" width="8" height="11" viewBox="0 0 8 11"><path d="M2 1l4 4.500L2 10" fill="none" stroke="#555" stroke-width="2"/></svg>
            </div>
          </div>
          <div class="split"></div>
          ${['相依性', '细节', '预览'].map((s) => html`
            <div class="sec">${s}
              <svg width="16" height="12" viewBox="0 0 16 12"><path d="M1.500 1.500L8 9.500 14.500 1.500" fill="none" stroke="#2f86b8" stroke-width="3"/></svg>
            </div>`)}
        </div>
        <div class="view">${this.renderModel()}</div>
      </div>
      <div class="status">${icon('flag')}${icon('fit')}</div>
      <div class="black"></div>
      ${this.renderMark()}
    `;
  }
}
